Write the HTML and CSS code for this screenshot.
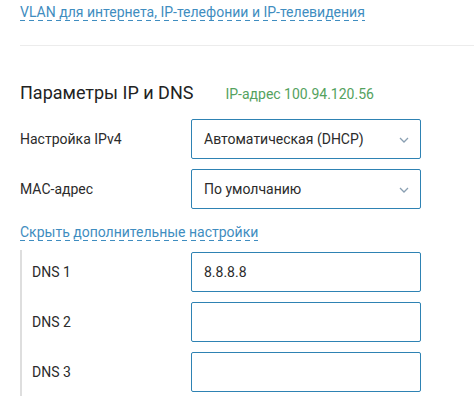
FILE: index.html
```html
<!DOCTYPE html>
<html lang="ru">
<head>
<meta charset="utf-8">
<link rel="stylesheet" href="styles.css">
</head>
<body>
<div class="page">
  <div class="top-link"><a class="dlink">VLAN для интернета, IP-телефонии и IP-телевидения</a></div>
  <div class="divider"></div>
  <div class="section-head">
    <h2 class="title">Параметры IP и DNS</h2>
    <span class="ip">IP-адрес 100.94.120.56</span>
  </div>
  <div class="form-row">
    <div class="label">Настройка IPv4</div>
    <div class="field select">Автоматическая (DHCP)
      <svg class="chev" width="10" height="6" viewBox="0 0 10 6"><polyline points="1,1 5,5 9,1" fill="none" stroke="#8a9fb2" stroke-width="1.3"/></svg>
    </div>
  </div>
  <div class="form-row">
    <div class="label">MAC-адрес</div>
    <div class="field select">По умолчанию
      <svg class="chev" width="10" height="6" viewBox="0 0 10 6"><polyline points="1,1 5,5 9,1" fill="none" stroke="#8a9fb2" stroke-width="1.3"/></svg>
    </div>
  </div>
  <div class="toggle-link"><a class="dlink">Скрыть дополнительные настройки</a></div>
  <div class="advanced">
    <div class="form-row">
      <div class="label sub">DNS 1</div>
      <div class="field">8.8.8.8</div>
    </div>
    <div class="form-row">
      <div class="label sub">DNS 2</div>
      <div class="field"></div>
    </div>
    <div class="form-row">
      <div class="label sub">DNS 3</div>
      <div class="field"></div>
    </div>
  </div>
</div>
</body>
</html>
```
FILE: styles.css
```css
html, body {
  margin: 0;
  padding: 0;
  background: #fff;
}
body {
  font-family: Roboto, "Liberation Sans", sans-serif;
  color: #2b2b2b;
  font-size: 14px;
}
.page {
  padding-left: 20px;
  overflow: hidden;
  height: 396px;
}
.top-link {
  padding-top: 3px;
  height: 18px;
}
.dlink {
  display: inline-block;
  line-height: 18px;
  color: #3f8dc0;
  font-size: 14px;
  background-image: repeating-linear-gradient(to right, #3f8dc0 0 5px, transparent 5px 9px);
  background-size: 100% 1px;
  background-repeat: no-repeat;
  background-position: 0 100%;
  cursor: pointer;
}
.divider {
  margin-top: 24px;
  height: 1px;
  background: #ececec;
}
.section-head {
  margin-top: 35px;
  display: flex;
  align-items: baseline;
  gap: 32px;
  height: 24px;
}
.title {
  margin: 0;
  font-size: 18px;
  font-weight: 400;
  line-height: 24px;
  color: #222;
}
.ip {
  font-size: 14px;
  color: #54a25e;
}
.section-head + .form-row {
  margin-top: 14px;
}
.form-row {
  display: flex;
  align-items: center;
  height: 40px;
}
.form-row + .form-row {
  margin-top: 10px;
}
.label {
  width: 171px;
  flex: none;
  font-size: 14px;
  color: #2b2b2b;
}
.label.sub {
  width: 159px;
}
.field {
  box-sizing: border-box;
  width: 230px;
  height: 40px;
  border: 1px solid #2e82b3;
  border-radius: 2px;
  padding-left: 12px;
  display: flex;
  align-items: center;
  font-size: 14px;
  color: #2b2b2b;
  position: relative;
}
.chev {
  position: absolute;
  right: 11px;
  top: 17px;
}
.toggle-link {
  margin-top: 14px;
  height: 18px;
}
.advanced {
  margin-top: 9px;
  padding-top: 2px;
  padding-left: 10px;
  border-left: 2px solid #dedede;
  height: 200px;
}
```
